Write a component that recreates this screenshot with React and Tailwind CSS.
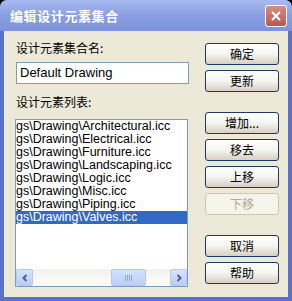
import React from "react";

const items = [
  "gs\\Drawing\\Architectural.icc",
  "gs\\Drawing\\Electrical.icc",
  "gs\\Drawing\\Furniture.icc",
  "gs\\Drawing\\Landscaping.icc",
  "gs\\Drawing\\Logic.icc",
  "gs\\Drawing\\Misc.icc",
  "gs\\Drawing\\Piping.icc",
  "gs\\Drawing\\Valves.icc",
];

const cjk = { fontFamily: '"Noto Sans CJK SC", "Noto Sans", sans-serif' };
const latin = { fontFamily: '"Liberation Sans", Arial, sans-serif' };

function XpButton({ children, disabled }) {
  return (
    <button
      className={
        disabled
          ? "w-[74px] h-[22px] rounded-[3px] border border-[#c9c7ba] bg-[#f5f4ea] text-[#aca899] text-[12px] leading-none flex items-center justify-center"
          : "w-[74px] h-[22px] rounded-[3px] border border-[#1c3a5e] bg-gradient-to-b from-[#ffffff] via-[#f4f4f0] to-[#d6d0c5] text-black text-[12px] leading-none flex items-center justify-center"
      }
      style={cjk}
    >
      {children}
    </button>
  );
}

function ArrowBtn({ dir }) {
  return (
    <div className="w-[17px] h-[17px] rounded-[2px] border border-[#b4c8f6] bg-gradient-to-b from-[#d8e3fd] to-[#b9cdfa] flex items-center justify-center">
      <svg width="8" height="8" viewBox="0 0 8 8">
        {dir === "left" ? (
          <path d="M5.5 1 L2.5 4 L5.5 7" stroke="#4d6185" strokeWidth="2" fill="none" />
        ) : (
          <path d="M2.5 1 L5.5 4 L2.5 7" stroke="#4d6185" strokeWidth="2" fill="none" />
        )}
      </svg>
    </div>
  );
}

export default function App() {
  return (
    <div className="w-[292px] h-[301px] bg-black overflow-hidden">
      <div className="w-full h-full rounded-t-[7px] bg-[#5b6fcf] flex flex-col">
        <div className="h-[31px] shrink-0 rounded-t-[7px] bg-gradient-to-b from-[#a9baf0] via-[#8a9fe2] to-[#7d93dc] flex items-center justify-between pl-[10px] pr-[5px]">
          <span className="text-white font-bold text-[13px] tracking-[0.6px]" style={cjk}>
            编辑设计元素集合
          </span>
          <div className="w-[22px] h-[22px] rounded-[3px] border border-white bg-gradient-to-b from-[#d98a84] to-[#b9574f] flex items-center justify-center">
            <svg width="12" height="12" viewBox="0 0 12 12">
              <path d="M2 2 L10 10 M10 2 L2 10" stroke="white" strokeWidth="2.2" />
            </svg>
          </div>
        </div>
        <div className="flex-1 mx-[4px] mb-[4px] bg-[#ece9d8] flex">
          <div className="pl-[12px] pt-[9px] w-[189px] shrink-0 flex flex-col">
            <div className="h-[16px] text-[12px] leading-[16px] text-black" style={cjk}>
              设计元素集合名:
            </div>
            <div className="mt-[6px] w-[173px] h-[22px] border border-[#7f9db9] bg-white flex items-center pl-[3px] text-[13px] text-black" style={latin}>
              Default Drawing
            </div>
            <div className="mt-[10px] h-[16px] text-[12px] leading-[16px] text-black" style={cjk}>
              设计元素列表:
            </div>
            <div className="mt-[9px] -ml-[1px] w-[173px] h-[168px] border border-[#7f9db9] bg-white flex flex-col overflow-hidden">
              <div className="flex-1">
                {items.map((t, i) => (
                  <div
                    key={t}
                    className={
                      i === 7
                        ? "h-[13px] leading-[13px] text-[12.5px] whitespace-nowrap bg-[#316ac5] text-white"
                        : "h-[13px] leading-[13px] text-[12.5px] whitespace-nowrap text-black"
                    }
                    style={latin}
                  >
                    {t}
                  </div>
                ))}
              </div>
              <div className="h-[17px] flex bg-gradient-to-b from-[#f3f1ec] to-[#fefefb]">
                <ArrowBtn dir="left" />
                <div className="flex-1 relative">
                  <div className="absolute left-[78px] top-0 w-[35px] h-[17px] rounded-[2px] border border-[#b4c8f6] bg-gradient-to-b from-[#d4e0fd] to-[#bccffb] flex items-center justify-center">
                    <span className="w-[1px] h-[6px] bg-[#8fa6e0]" />
                    <span className="w-[1px] h-[6px] bg-[#8fa6e0] ml-[1px]" />
                    <span className="w-[1px] h-[6px] bg-[#8fa6e0] ml-[1px]" />
                    <span className="w-[1px] h-[6px] bg-[#8fa6e0] ml-[1px]" />
                  </div>
                </div>
                <ArrowBtn dir="right" />
              </div>
            </div>
          </div>
          <div className="pl-[12px] pt-[12px] flex flex-col">
            <XpButton>确定</XpButton>
            <div className="mt-[5px]"><XpButton>更新</XpButton></div>
            <div className="mt-[20px]"><XpButton>增加...</XpButton></div>
            <div className="mt-[5px]"><XpButton>移去</XpButton></div>
            <div className="mt-[5px]"><XpButton>上移</XpButton></div>
            <div className="mt-[5px]"><XpButton disabled>下移</XpButton></div>
            <div className="mt-[20px]"><XpButton>取消</XpButton></div>
            <div className="mt-[5px]"><XpButton>帮助</XpButton></div>
          </div>
        </div>
      </div>
    </div>
  );
}
